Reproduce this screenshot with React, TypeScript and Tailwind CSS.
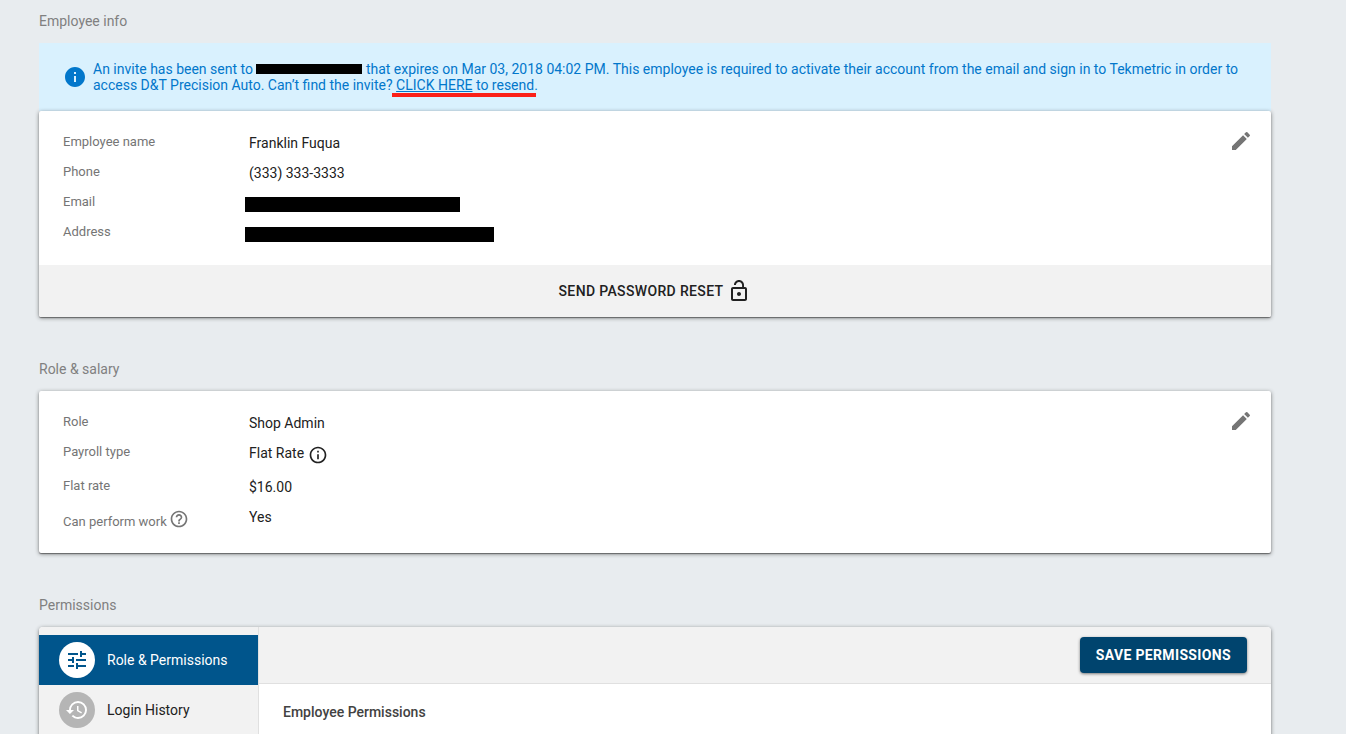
import type { ReactNode } from 'react';
import {
  MdEdit,
  MdHelpOutline,
  MdHistory,
  MdInfo,
  MdInfoOutline,
  MdLockOpen,
  MdTune,
} from 'react-icons/md';

const cardShadow = 'shadow-[0_1px_4px_rgba(0,0,0,0.45),0_1px_1px_rgba(0,0,0,0.4)]';

const SectionTitle = ({ children }: { children: ReactNode }) => (
  <h2 className="mb-3 text-sm leading-5 text-[#808080]">{children}</h2>
);

type RowProps = {
  label: ReactNode;
  children: ReactNode;
  tall?: boolean;
};

const Row = ({ label, children, tall }: RowProps) => (
  <div className={tall ? 'flex h-[34px]' : 'flex h-[30px]'}>
    <dt className="w-[186px] shrink-0 text-[13px] leading-[22px] text-[#757575]">{label}</dt>
    <dd className="pt-0.5 text-sm leading-5 text-[#212121]">{children}</dd>
  </div>
);

const Details = ({ editLabel, children }: { editLabel: string; children: ReactNode }) => (
  <div className="flex items-start justify-between pt-[18px] pr-[18px] pb-[14px] pl-6">
    <dl className="pt-0.5">{children}</dl>
    <button type="button" aria-label={editLabel} className="cursor-pointer text-[#757575]">
      <MdEdit className="h-6 w-6" />
    </button>
  </div>
);

const InviteNotice = () => (
  <div className="flex items-center gap-[6px] bg-[#d9f1fe] px-6 py-[18px] text-[#0277cb]">
    <MdInfo className="h-6 w-6 shrink-0" />
    <p className="text-sm leading-4">
      An invite has been sent to{' '}
      <span className="inline-block h-[10px] w-[106px] bg-black" /> that expires on Mar 03, 2018
      04:02 PM. This employee is required to activate their account from the email and sign in to
      Tekmetric in order to access D&amp;T Precision Auto. Can’t find the invite?{' '}
      <span className="relative">
        <a href="#resend" className="underline">CLICK HERE</a> to resend
        {/* Red marker under the resend link */}
        <span className="absolute -right-0.5 -bottom-1 -left-1 h-1 bg-[#fb2018]" />
      </span>
      .
    </p>
  </div>
);

const App = () => {
  return (
    <main className="h-screen overflow-hidden bg-[#e8ecef] pt-[11px] pr-[75px] pl-[39px] font-['Roboto',sans-serif]">
      {/* Employee info */}
      <section className="mb-[42px]">
        <SectionTitle>Employee info</SectionTitle>
        <InviteNotice />
        <div className={`overflow-hidden rounded-xs bg-white ${cardShadow}`}>
          <Details editLabel="Edit employee info">
            <Row label="Employee name">Franklin Fuqua</Row>
            <Row label="Phone">(333) 333-3333</Row>
            <Row label="Email">
              <span className="mt-1 -ml-1 block h-[15px] w-[215px] bg-black" />
            </Row>
            <Row label="Address">
              <span className="mt-1 -ml-1 block h-[15px] w-[249px] bg-black" />
            </Row>
          </Details>
          <button
            type="button"
            className="flex h-[52px] w-full cursor-pointer items-center justify-center gap-1 bg-[#f2f2f2] text-sm font-medium tracking-wide text-[#212121]"
          >
            SEND PASSWORD RESET
            <MdLockOpen className="h-6 w-6" />
          </button>
        </div>
      </section>

      {/* Role & salary */}
      <section className="mb-[42px]">
        <SectionTitle>Role &amp; salary</SectionTitle>
        <div className={`rounded-xs bg-white ${cardShadow}`}>
          <Details editLabel="Edit role and salary">
            <Row label="Role">Shop Admin</Row>
            <Row label="Payroll type" tall>
              <span className="flex gap-1">
                Flat Rate
                <MdInfoOutline className="mt-0.5 h-5 w-5" />
              </span>
            </Row>
            <Row label="Flat rate">$16.00</Row>
            <Row
              tall
              label={
                <span className="flex gap-0.5 pt-1">
                  <span className="pt-0.5">Can perform work</span>
                  <MdHelpOutline className="h-5 w-5" />
                </span>
              }
            >
              Yes
            </Row>
          </Details>
        </div>
      </section>

      {/* Permissions */}
      <section>
        <SectionTitle>Permissions</SectionTitle>
        <div className={`flex min-h-40 overflow-hidden rounded-sm bg-white ${cardShadow}`}>
          <nav className="w-[220px] shrink-0 border-r border-[#e0e0e0] bg-[#f2f2f2] pt-2 text-sm">
            <a href="#role" className="flex h-[50px] items-center gap-3 bg-[#00558c] pl-5 text-white">
              <span className="flex h-9 w-9 items-center justify-center rounded-full bg-white text-[#00558c]">
                <MdTune className="h-6 w-6" />
              </span>
              Role &amp; Permissions
            </a>
            <a href="#history" className="flex h-[50px] items-center gap-3 pl-5 text-[#212121]">
              <span className="flex h-9 w-9 items-center justify-center rounded-full bg-[#b5b5b5] text-white">
                <MdHistory className="h-6 w-6" />
              </span>
              Login History
            </a>
          </nav>
          <div className="flex-1">
            <div className="flex h-[57px] items-center justify-end border-b border-[#e0e0e0] bg-[#f2f2f2] pr-6">
              <button
                type="button"
                className="h-9 cursor-pointer rounded-sm bg-[#00446e] px-4 text-sm font-bold tracking-wide text-white shadow-[0_1px_3px_rgba(0,0,0,0.5)]"
              >
                SAVE PERMISSIONS
              </button>
            </div>
            <h3 className="px-6 pt-[18px] text-sm leading-5 font-medium text-[#424242]">
              Employee Permissions
            </h3>
          </div>
        </div>
      </section>
    </main>
  );
};

export default App;
